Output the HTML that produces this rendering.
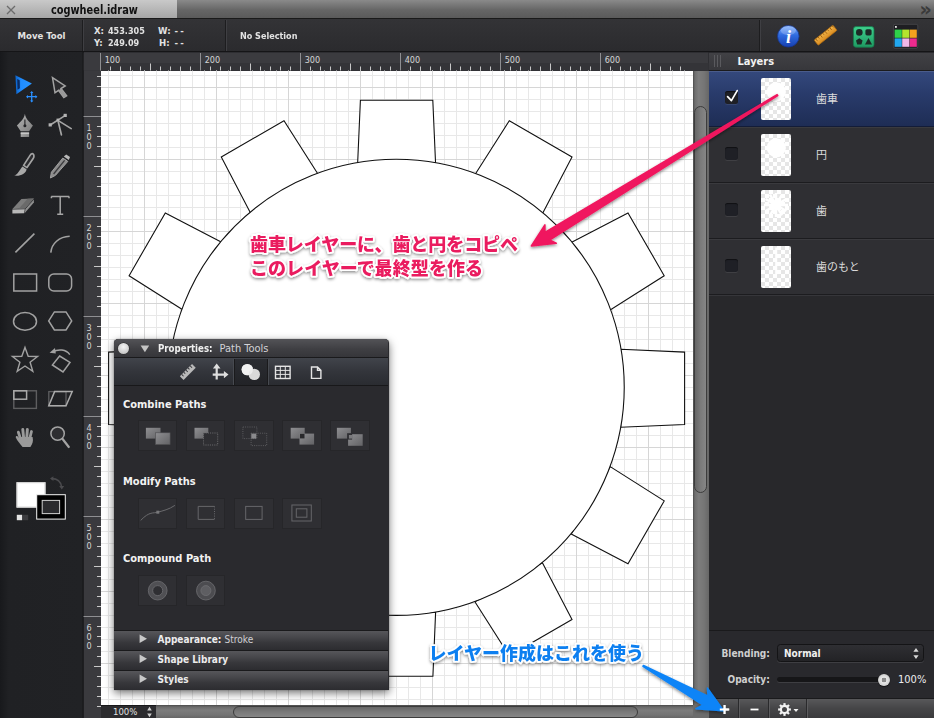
<!DOCTYPE html>
<html lang="ja">
<head>
<meta charset="utf-8">
<title>cogwheel.idraw</title>
<style>
html,body{margin:0;padding:0;}
body{width:934px;height:718px;overflow:hidden;position:relative;background:#232326;font-family:"DejaVu Sans Condensed","DejaVu Sans","Liberation Sans","Noto Sans CJK JP",sans-serif;color:#e6e6e6;}
.abs{position:absolute;}
#tabbar{left:0;top:0;width:934px;height:19px;background:linear-gradient(#8a8a8a,#666 55%,#5a5a5a);border-bottom:1px solid #1a1a1a;box-sizing:border-box;}
#tab{left:0;top:0;width:177px;height:18px;background:linear-gradient(#c9c9c9,#b4b4b4 60%,#a6a6a6);}
#tabtitle{left:50.5px;top:1.5px;white-space:nowrap;font:bold 12px/16px "DejaVu Sans Condensed","DejaVu Sans",sans-serif;color:#111;transform:scaleX(0.908);transform-origin:0 50%;}
#toolbar{left:0;top:19px;width:934px;height:33px;background:linear-gradient(#333336,#2b2b2e);border-bottom:1px solid #151517;box-sizing:border-box;}
.tsep{top:20px;width:1px;height:31px;background:#3f3f43;box-shadow:-1px 0 0 #1d1d1f;}
.tb{font:bold 9.5px/11px "DejaVu Sans Condensed","DejaVu Sans",sans-serif;color:#e2e2e2;white-space:nowrap;}
#toolbox{left:0;top:52px;width:83px;height:666px;background:linear-gradient(90deg,#18191c 0,#202124 9px,#212225 100%);border-right:1px solid #141416;}
#canvas{left:101px;top:70.5px;width:592px;height:634.5px;background:#fff;}
#rightpanel{left:708.5px;top:52px;width:225.5px;height:666px;background:#2a2a2e;}
.rl{font:9px "DejaVu Sans Condensed","DejaVu Sans",sans-serif;fill:#d4d4d4;}

#lyhead{left:708.5px;top:52.5px;width:225.5px;height:18px;background:linear-gradient(#414145,#37373b);border-bottom:1px solid #1b1b1d;box-sizing:border-box;}
.row{left:708.5px;width:225.5px;height:56px;box-sizing:border-box;background:#2f2f33;border-top:1px solid #3a3a3e;border-bottom:1px solid #1c1c1f;}
.row.sel{background:linear-gradient(#34487c,#293b6b 40%,#1e2d55);border-top:1px solid #4a5c8c;border-bottom:1px solid #131c38;}
.cb{left:725px;width:13px;height:13px;border-radius:2.5px;background:#1f2026;box-shadow:0 1px 0 rgba(255,255,255,0.08), inset 0 1px 1px rgba(0,0,0,0.5);}
.thumb{left:761px;width:30px;height:42px;border-radius:2px;background-color:#fff;background-image:linear-gradient(45deg,#e6e6e6 25%,transparent 25%,transparent 75%,#e6e6e6 75%),linear-gradient(45deg,#e6e6e6 25%,transparent 25%,transparent 75%,#e6e6e6 75%);background-size:8px 8px;background-position:0 0,4px 4px;overflow:hidden;}
.lname{left:816px;font:11px/14px "Liberation Sans","Noto Sans CJK JP",sans-serif;color:#dcdcdc;white-space:nowrap;}
.plabel{font:bold 10px/13px "DejaVu Sans Condensed","DejaVu Sans",sans-serif;color:#cfcfcf;white-space:nowrap;}
#bbar{left:708.5px;top:697.5px;width:225.5px;height:20.5px;background:linear-gradient(#58585a,#454547 50%,#3a3a3c);border-top:1px solid #1a1a1c;box-sizing:border-box;}
.bsep{top:698.5px;width:1px;height:19.5px;background:#2a2a2c;box-shadow:1px 0 0 #5c5c5e;}

#vtrack{left:693px;top:70.5px;width:15.5px;height:634.5px;background:linear-gradient(90deg,#4c4c4c 0,#6e6e6e 12%,#7d7d7d 35%,#757575 70%,#666 100%);}
#vthumb{left:694px;top:106px;width:13px;height:387px;border-radius:6.5px;box-sizing:border-box;border:1px solid #3c3c3c;background:linear-gradient(90deg,#666,#7a7a7a 50%,#868686);}
#htrack{left:156px;top:705px;width:552.5px;height:13px;background:linear-gradient(#4a4a4a 0,#6a6a6a 15%,#7c7c7c 40%,#747474 75%,#666 100%);}
#hthumb{left:232.5px;top:705.5px;width:405.5px;height:12.5px;border-radius:6.5px;box-sizing:border-box;border:1px solid #3c3c3c;background:linear-gradient(#666,#7a7a7a 50%,#868686);}
#zoombox{left:101px;top:705px;width:55px;height:13px;background:#2c2c2f;border-top:1px solid #18181a;box-sizing:border-box;}

#fp{left:114px;top:339px;width:274.5px;height:350.5px;border-radius:4.5px 4.5px 0 0;background:#2a2a2e;box-shadow:0 3px 9px rgba(0,0,0,0.55),0 0 1px rgba(0,0,0,0.7);overflow:hidden;}
#fptitle{left:0;top:0;width:274px;height:19px;background:linear-gradient(#535357,#3f3f43 55%,#36363a);border-bottom:1px solid #1a1a1c;box-sizing:border-box;}
#fptools{left:0;top:19px;width:274px;height:27.5px;background:linear-gradient(#41444b,#33353b 50%,#2a2c31);border-bottom:1px solid #18181a;box-sizing:border-box;}
.fph{font:bold 11px/14px "DejaVu Sans Condensed","DejaVu Sans",sans-serif;color:#f2f2f2;white-space:nowrap;left:9px;}
.fbtn{width:39.5px;height:31.5px;background:#2f2f33;box-shadow:0 0 0 1px #262629 inset;}
.acc{left:0;width:274px;height:20px;box-sizing:border-box;background:linear-gradient(#56565a,#48484c 30%,#38383c 60%,#2c2c30);border-top:1px solid #1a1a1c;}
.acct{left:43.5px;font:bold 10px/13px "DejaVu Sans Condensed","DejaVu Sans",sans-serif;color:#ececec;white-space:nowrap;}
</style>
</head>
<body>
<!-- TAB BAR -->
<div id="tabbar" class="abs"></div>
<div id="tab" class="abs"></div>
<div id="tabtitle" class="abs">cogwheel.idraw</div>
<svg class="abs" style="left:5px;top:4px" width="12" height="12" viewBox="0 0 12 12"><path d="M2 2 L10 10 M10 2 L2 10" stroke="#6c6c6c" stroke-width="1.3" fill="none"/></svg>
<div class="abs" style="left:919.5px;top:-2.5px;font:bold 19px/22px 'DejaVu Sans',sans-serif;color:#3a3a3a;">»</div>

<!-- TOOLBAR -->
<div id="toolbar" class="abs"></div>
<div class="abs tsep" style="left:82.5px"></div>
<div class="abs tsep" style="left:225.5px"></div>
<div class="abs tsep" style="left:759.5px"></div>
<div class="abs tb" style="left:17.5px;top:30px;">Move Tool</div>
<div class="abs tb" style="left:94px;top:25px;">X:</div>
<div class="abs tb" style="left:108px;top:25px;transform:scaleX(0.945);transform-origin:0 50%;">453.305</div>
<div class="abs tb" style="left:158px;top:25px;">W:</div>
<div class="abs tb" style="left:174.5px;top:25px;letter-spacing:2.2px;">--</div>
<div class="abs tb" style="left:94px;top:37px;">Y:</div>
<div class="abs tb" style="left:108px;top:37px;transform:scaleX(0.945);transform-origin:0 50%;">249.09</div>
<div class="abs tb" style="left:159px;top:37px;">H:</div>
<div class="abs tb" style="left:174.5px;top:37px;letter-spacing:2.2px;">--</div>
<div class="abs tb" style="left:240px;top:30px;transform:scaleX(0.945);transform-origin:0 50%;">No Selection</div>


<!-- TOP RIGHT ICONS -->
<svg class="abs" style="left:760px;top:19px" width="174" height="33" viewBox="760 19 174 33">
<defs>
<linearGradient id="gi" x1="0" y1="0" x2="0" y2="1"><stop offset="0" stop-color="#7fb0ff"/><stop offset="0.45" stop-color="#2f6be0"/><stop offset="1" stop-color="#163fae"/></linearGradient>
<linearGradient id="gr" x1="0" y1="0" x2="0" y2="1"><stop offset="0" stop-color="#f2b54a"/><stop offset="1" stop-color="#d98a1e"/></linearGradient>
<linearGradient id="gg" x1="0" y1="0" x2="0" y2="1"><stop offset="0" stop-color="#3fd08e"/><stop offset="1" stop-color="#1e9a62"/></linearGradient>
</defs>
<circle cx="788.3" cy="36.3" r="10.8" fill="url(#gi)" stroke="#16348a" stroke-width="0.8"/>
<ellipse cx="788.3" cy="30.5" rx="7.6" ry="4.6" fill="#fff" opacity="0.22"/>
<text x="788.6" y="42.6" text-anchor="middle" font-family="'Liberation Serif','DejaVu Serif',serif" font-style="italic" font-weight="bold" font-size="18" fill="#fff">i</text>
<g transform="translate(825.6,35.2) rotate(-38.5)"><rect x="-12" y="-3.3" width="24" height="6.6" rx="0.8" fill="url(#gr)" stroke="#b06e12" stroke-width="0.7"/><path d="M-10 -3.3 v3 M-7 -3.3 v2 M-4 -3.3 v3 M-1 -3.3 v2 M2 -3.3 v3 M5 -3.3 v2 M8 -3.3 v3 M11 -3.3 v2" stroke="#9a5c0c" stroke-width="0.8"/></g>
<rect x="853.4" y="26.6" width="20.6" height="20.6" rx="2.6" fill="url(#gg)" stroke="#14784a" stroke-width="0.8"/>
<g fill="#1c2a26"><circle cx="859.3" cy="32.4" r="3.3"/><rect x="865.4" y="29.2" width="6.2" height="6.2" rx="1.6"/><path d="M859.3 38.2 L862.6 40.6 L861.4 44.6 H857.2 L856 40.6 Z"/><path d="M868.5 38 L872 44.6 H865 Z"/></g>
<rect x="893.4" y="24.3" width="24.4" height="24" rx="1.6" fill="#1e1e22" stroke="#4a4a4e" stroke-width="0.8"/>
<rect x="895" y="26" width="1.8" height="1.8" fill="#e8e8e8"/>
<rect x="894.6" y="29.6" width="7.2" height="8.2" fill="#2fd24a"/><rect x="902.2" y="29.6" width="7.2" height="8.2" fill="#b4e42e"/><rect x="909.8" y="29.6" width="7" height="8.2" fill="#f5a21e"/>
<rect x="894.6" y="38.4" width="7.2" height="8.4" fill="#22a8f0"/><rect x="902.2" y="38.4" width="7.2" height="8.4" fill="#f0b8e8"/><rect x="909.8" y="38.4" width="7" height="8.4" fill="#ee2a8e"/>
</svg>

<!-- TOOLBOX -->
<div id="toolbox" class="abs"></div>


<!-- TOOLBOX ICONS -->
<svg class="abs" style="left:0;top:52px" width="83" height="666" viewBox="0 52 83 666">
<defs>
<linearGradient id="gm" x1="0" y1="0" x2="1" y2="1"><stop offset="0" stop-color="#b4b4b4"/><stop offset="1" stop-color="#7e7e7e"/></linearGradient>
<linearGradient id="gb" x1="0" y1="0" x2="1" y2="0"><stop offset="0" stop-color="#0c62c8"/><stop offset="0.35" stop-color="#1f8cff"/><stop offset="1" stop-color="#2a96ff"/></linearGradient>
</defs>
<!-- move tool -->
<path d="M15.4 75.2 L31.9 83.6 L16.4 94.2 Z" fill="url(#gb)"/>
<path d="M17.200 79 L19.700 80.300 L19.900 88.200 L17.500 89.800 Z" fill="#0b2b63"/>
<g stroke="#2a90ff" stroke-width="1.3" fill="#2a90ff"><path d="M31.7 92 V101.4 M27 96.7 H36.4" fill="none"/><path d="M31.7 91 l1.7 2 h-3.4z M31.7 102.4 l1.7 -2 h-3.4z M26 96.7 l2 -1.7 v3.4z M37.4 96.7 l-2 -1.7 v3.4z" stroke="none"/></g>
<!-- select arrow -->
<path d="M52.500 77.600 L65.200 85.900 L61 88.500 L66.600 95.800 L63.800 97.600 L58.500 90.300 L55 92.800 Z" fill="#2a2a2d" stroke="#a3a3a3" stroke-width="1.500" stroke-linejoin="miter"/><path d="M61 88.500 L66.600 95.800 L63.800 97.600 L58.500 90.300 Z" fill="#9a9a9a"/>
<!-- pen nib -->
<path d="M24.9 113.8 C24.2 118.8 20.4 122 16.9 125.5 L20.7 131.3 H29.1 L32.9 125.5 C29.400 122 25.600 118.800 24.900 113.800 Z" fill="url(#gm)"/>
<path d="M24.9 119.600 V125" stroke="#242427" stroke-width="1.100"/><circle cx="24.900" cy="125.700" r="1.500" fill="#242427"/>
<rect x="20.700" y="132.500" width="8.400" height="4.500" fill="url(#gm)"/><rect x="20.700" y="132.500" width="8.400" height="1.300" fill="#d0d0d0"/>
<!-- anchor tool -->
<g stroke="#a4a4a4" stroke-width="1.700" fill="none" stroke-linecap="round"><path d="M50.600 124.800 L65 115.600"/><path d="M57.900 120.400 L61.400 134.800"/><path d="M57.900 120.400 L71.200 128.600"/></g>
<rect x="48.600" y="123.300" width="3.200" height="3.200" fill="#b4b4b4"/><rect x="63.600" y="113.800" width="3.200" height="3.200" fill="#b4b4b4"/><rect x="56.500" y="118.600" width="2.600" height="2.600" fill="#b4b4b4"/>
<!-- brush -->
<path d="M32.800 153.800 C34.400 154.800 34.200 157 33 158.800 L27 167.600 L23.600 165.400 L29.400 156.400 C30.400 154.600 31.600 153.200 32.800 153.800 Z" fill="#2c2c2f" stroke="#a4a4a4" stroke-width="1.700" stroke-linejoin="round"/>
<path d="M22.400 166.400 L26.600 169.200 C25.800 173.800 20.400 176.400 14.200 175.600 C18 174.200 19.200 170.400 22.400 166.400 Z" fill="#a8a8a8"/>
<!-- pencil -->
<path d="M62.800 158 L67.800 161.400 L55.400 175.400 L50.400 178 L51.400 172.200 Z" fill="#8c8c8c" stroke="#a0a0a0" stroke-width="1" stroke-linejoin="round"/>
<path d="M64.600 160.400 L53.600 174" stroke="#3a3a3d" stroke-width="1.300"/>
<path d="M63.800 156.600 L66.200 154.400 L70 157 L68.800 160 Z" fill="#b8b8b8"/>
<!-- eraser -->
<path d="M21.4 199 L33.9 198.6 L25 208.6 L12.4 209 Z" fill="#7c7c7c"/>
<path d="M12.4 209.6 L24.8 209.2 L24.2 213.2 L12.4 213.6 Z" fill="#b8b8b8"/>
<path d="M25.4 209 L33.9 199.4 V202.6 L24.8 213 Z" fill="#8e8e8e"/>
<path d="M27.6 198.8 L33.9 198.6 L25 208.6 L18.8 208.8Z" fill="#6a6a6a"/>
<!-- T -->
<path d="M51.2 196.4 H69.2 M60.2 196.4 V214.2 M57.2 214.2 H63.2 M51.4 196.4 v1.8 M69 196.4 v1.8" stroke="#a6a6a6" stroke-width="1.5" fill="none"/>
<!-- line -->
<path d="M34.4 233.6 L15.4 252.4" stroke="#a2a2a2" stroke-width="1.6"/>
<!-- arc -->
<path d="M69.7 236.3 C59 236.8 51.6 243.6 50.8 252.6" stroke="#a2a2a2" stroke-width="1.6" fill="none"/>
<!-- rect, rrect -->
<rect x="13.8" y="274" width="22.8" height="17" fill="none" stroke="#a2a2a2" stroke-width="1.5"/>
<rect x="48.8" y="274" width="22.8" height="17" rx="5" fill="none" stroke="#a2a2a2" stroke-width="1.5"/>
<!-- ellipse, hexagon -->
<ellipse cx="25" cy="321.4" rx="11.5" ry="8.8" fill="none" stroke="#a2a2a2" stroke-width="1.5"/>
<path d="M48.7 320.9 L54.4 311.9 H66 L71.7 320.9 L66 329.9 H54.4 Z" fill="none" stroke="#a2a2a2" stroke-width="1.5"/>
<!-- star -->
<polygon points="25.0,347.4 28.2,356.2 37.6,356.5 30.1,362.3 32.8,371.3 25.0,366.0 17.2,371.3 19.9,362.3 12.4,356.5 21.8,356.2" fill="none" stroke="#a2a2a2" stroke-width="1.4"/>
<!-- rotate -->
<path d="M59.6 356 L70 362.4 L63 372 L52.4 365 Z" fill="none" stroke="#a2a2a2" stroke-width="1.5"/>
<path d="M69.8 354.6 C66 349.4 58.6 348.6 52.4 352" fill="none" stroke="#a2a2a2" stroke-width="1.5"/>
<path d="M49.6 352.8 L55 348 L55.8 353.6 Z" fill="#a2a2a2"/>
<!-- scale -->
<rect x="13.8" y="390.8" width="22.6" height="17.6" fill="none" stroke="#5e5e60" stroke-width="1.4"/>
<rect x="13.8" y="390.8" width="12.8" height="8.4" fill="none" stroke="#aaa" stroke-width="1.5"/>
<!-- shear -->
<rect x="48.8" y="391.6" width="17.2" height="14.2" fill="none" stroke="#5e5e60" stroke-width="1.3"/>
<path d="M54.6 391.6 H72.2 L66 405.8 H48.8 Z" fill="none" stroke="#aaa" stroke-width="1.5"/>
<!-- hand -->
<g fill="#9a9a9a"><rect x="18.2" y="430.6" width="2.8" height="10" rx="1.4" transform="rotate(-18 19.6 436)"/><rect x="21.8" y="428" width="2.9" height="11" rx="1.4" transform="rotate(-6 23.2 434)"/><rect x="25.6" y="428" width="2.9" height="11" rx="1.4" transform="rotate(4 27 434)"/><rect x="29.2" y="430" width="2.8" height="10" rx="1.4" transform="rotate(14 30.6 435)"/>
<path d="M19.6 437 H32.6 C33.6 441.4 32.4 444.2 30.4 447 H22.6 C20.2 444 17.2 441 15.8 437.6 C15.4 436 17 435.4 18 436.6 L20.6 440 Z"/></g>
<!-- magnifier -->
<circle cx="57.6" cy="433.6" r="6.7" fill="#2e2e31" stroke="#a4a4a4" stroke-width="1.5"/>
<path d="M62.4 438.8 L68.8 447" stroke="#a4a4a4" stroke-width="2.2" stroke-linecap="round"/>
<!-- swap arrow -->
<path d="M51.4 478.6 C57 478.4 61 481.6 61.6 487" fill="none" stroke="#4a4a4d" stroke-width="1.6"/><path d="M50 478.6 l3.4 -2.4 v4.8z M61.8 489.4 l-2.6 -3.4 h5z" fill="#4a4a4d"/>
<!-- fill / stroke swatches -->
<rect x="16.5" y="482.2" width="29" height="25.4" fill="#fff" stroke="#d8d8d8" stroke-width="0"/>
<rect x="17" y="482.7" width="28" height="24.4" fill="#fff" stroke="#cfcfcf" stroke-width="1"/>
<rect x="36.7" y="494.7" width="28.6" height="24.4" fill="#000" stroke="#f4f4f4" stroke-width="1"/>
<rect x="42.2" y="500.4" width="17.4" height="13.2" fill="#2b2b2e" stroke="#d0d0d0" stroke-width="1"/>
<rect x="16.8" y="514.8" width="5.4" height="5.4" fill="#e4e4e4"/><rect x="22.8" y="514.8" width="5.4" height="5.4" fill="#3c3c3f"/>
</svg>

<!-- CANVAS -->
<div id="canvas" class="abs"></div>

<!-- MAIN SVG OVERLAY: rulers, grid, cog -->
<svg class="abs" style="left:0;top:0" width="934" height="718" viewBox="0 0 934 718">
<defs>
<pattern id="grid" x="108" y="75" width="12" height="12" patternUnits="userSpaceOnUse">
<path d="M0.5 0 V12 M0 0.5 H12" stroke="#e8e8e8" stroke-width="1" fill="none" shape-rendering="crispEdges"/>
</pattern>
<pattern id="grid2" x="144" y="87" width="72" height="72" patternUnits="userSpaceOnUse">
<path d="M0.5 0 V72 M0 0.5 H72" stroke="#d6d6d6" stroke-width="1" fill="none" shape-rendering="crispEdges"/>
</pattern>
<clipPath id="cv"><rect x="101" y="70.5" width="592" height="634.5"/></clipPath>
</defs>
<!-- rulers -->
<rect x="83.5" y="52.5" width="625" height="18" fill="#3b3b3f"/>
<rect x="83.5" y="63" width="625" height="7.5" fill="#343438"/>
<rect x="83.5" y="70.5" width="17.5" height="647.5" fill="#3a3a3e"/>
<rect x="83.5" y="52.5" width="17.5" height="18" fill="#3a3a3e"/>
<rect x="82.5" y="52" width="1" height="666" fill="#161618"/>
<rect x="100.0" y="53" width="1" height="17.5" fill="#8f8f92"/>
<text x="104.7" y="63.2" class="rl">100</text>
<rect x="110.0" y="66.5" width="1" height="4" fill="#c8c8c8"/>
<rect x="120.0" y="66.5" width="1" height="4" fill="#c8c8c8"/>
<rect x="130.0" y="66.5" width="1" height="4" fill="#c8c8c8"/>
<rect x="140.0" y="66.5" width="1" height="4" fill="#c8c8c8"/>
<rect x="150.0" y="63.5" width="1" height="7" fill="#c8c8c8"/>
<rect x="160.0" y="66.5" width="1" height="4" fill="#c8c8c8"/>
<rect x="170.0" y="66.5" width="1" height="4" fill="#c8c8c8"/>
<rect x="180.0" y="66.5" width="1" height="4" fill="#c8c8c8"/>
<rect x="190.0" y="66.5" width="1" height="4" fill="#c8c8c8"/>
<rect x="200.0" y="53" width="1" height="17.5" fill="#8f8f92"/>
<text x="204.7" y="63.2" class="rl">200</text>
<rect x="210.0" y="66.5" width="1" height="4" fill="#c8c8c8"/>
<rect x="220.0" y="66.5" width="1" height="4" fill="#c8c8c8"/>
<rect x="230.0" y="66.5" width="1" height="4" fill="#c8c8c8"/>
<rect x="240.0" y="66.5" width="1" height="4" fill="#c8c8c8"/>
<rect x="250.0" y="63.5" width="1" height="7" fill="#c8c8c8"/>
<rect x="260.0" y="66.5" width="1" height="4" fill="#c8c8c8"/>
<rect x="270.0" y="66.5" width="1" height="4" fill="#c8c8c8"/>
<rect x="280.0" y="66.5" width="1" height="4" fill="#c8c8c8"/>
<rect x="290.0" y="66.5" width="1" height="4" fill="#c8c8c8"/>
<rect x="300.0" y="53" width="1" height="17.5" fill="#8f8f92"/>
<text x="304.7" y="63.2" class="rl">300</text>
<rect x="310.0" y="66.5" width="1" height="4" fill="#c8c8c8"/>
<rect x="320.0" y="66.5" width="1" height="4" fill="#c8c8c8"/>
<rect x="330.0" y="66.5" width="1" height="4" fill="#c8c8c8"/>
<rect x="340.0" y="66.5" width="1" height="4" fill="#c8c8c8"/>
<rect x="350.0" y="63.5" width="1" height="7" fill="#c8c8c8"/>
<rect x="360.0" y="66.5" width="1" height="4" fill="#c8c8c8"/>
<rect x="370.0" y="66.5" width="1" height="4" fill="#c8c8c8"/>
<rect x="380.0" y="66.5" width="1" height="4" fill="#c8c8c8"/>
<rect x="390.0" y="66.5" width="1" height="4" fill="#c8c8c8"/>
<rect x="400.0" y="53" width="1" height="17.5" fill="#8f8f92"/>
<text x="404.7" y="63.2" class="rl">400</text>
<rect x="410.0" y="66.5" width="1" height="4" fill="#c8c8c8"/>
<rect x="420.0" y="66.5" width="1" height="4" fill="#c8c8c8"/>
<rect x="430.0" y="66.5" width="1" height="4" fill="#c8c8c8"/>
<rect x="440.0" y="66.5" width="1" height="4" fill="#c8c8c8"/>
<rect x="450.0" y="63.5" width="1" height="7" fill="#c8c8c8"/>
<rect x="460.0" y="66.5" width="1" height="4" fill="#c8c8c8"/>
<rect x="470.0" y="66.5" width="1" height="4" fill="#c8c8c8"/>
<rect x="480.0" y="66.5" width="1" height="4" fill="#c8c8c8"/>
<rect x="490.0" y="66.5" width="1" height="4" fill="#c8c8c8"/>
<rect x="500.0" y="53" width="1" height="17.5" fill="#8f8f92"/>
<text x="504.7" y="63.2" class="rl">500</text>
<rect x="510.0" y="66.5" width="1" height="4" fill="#c8c8c8"/>
<rect x="520.0" y="66.5" width="1" height="4" fill="#c8c8c8"/>
<rect x="530.0" y="66.5" width="1" height="4" fill="#c8c8c8"/>
<rect x="540.0" y="66.5" width="1" height="4" fill="#c8c8c8"/>
<rect x="550.0" y="63.5" width="1" height="7" fill="#c8c8c8"/>
<rect x="560.0" y="66.5" width="1" height="4" fill="#c8c8c8"/>
<rect x="570.0" y="66.5" width="1" height="4" fill="#c8c8c8"/>
<rect x="580.0" y="66.5" width="1" height="4" fill="#c8c8c8"/>
<rect x="590.0" y="66.5" width="1" height="4" fill="#c8c8c8"/>
<rect x="600.0" y="53" width="1" height="17.5" fill="#8f8f92"/>
<text x="604.7" y="63.2" class="rl">600</text>
<rect x="610.0" y="66.5" width="1" height="4" fill="#c8c8c8"/>
<rect x="620.0" y="66.5" width="1" height="4" fill="#c8c8c8"/>
<rect x="630.0" y="66.5" width="1" height="4" fill="#c8c8c8"/>
<rect x="640.0" y="66.5" width="1" height="4" fill="#c8c8c8"/>
<rect x="650.0" y="63.5" width="1" height="7" fill="#c8c8c8"/>
<rect x="660.0" y="66.5" width="1" height="4" fill="#c8c8c8"/>
<rect x="670.0" y="66.5" width="1" height="4" fill="#c8c8c8"/>
<rect x="680.0" y="66.5" width="1" height="4" fill="#c8c8c8"/>
<rect x="97" y="76.0" width="4" height="1" fill="#c8c8c8"/>
<rect x="97" y="86.0" width="4" height="1" fill="#c8c8c8"/>
<rect x="97" y="96.0" width="4" height="1" fill="#c8c8c8"/>
<rect x="97" y="106.0" width="4" height="1" fill="#c8c8c8"/>
<rect x="83.5" y="116.0" width="17.5" height="1" fill="#8f8f92"/>
<text x="89.2" y="130.5" class="rl" text-anchor="middle">1</text>
<text x="89.2" y="139.9" class="rl" text-anchor="middle">0</text>
<text x="89.2" y="149.3" class="rl" text-anchor="middle">0</text>
<rect x="97" y="126.0" width="4" height="1" fill="#c8c8c8"/>
<rect x="97" y="136.0" width="4" height="1" fill="#c8c8c8"/>
<rect x="97" y="146.0" width="4" height="1" fill="#c8c8c8"/>
<rect x="97" y="156.0" width="4" height="1" fill="#c8c8c8"/>
<rect x="94" y="166.0" width="7" height="1" fill="#c8c8c8"/>
<rect x="97" y="176.0" width="4" height="1" fill="#c8c8c8"/>
<rect x="97" y="186.0" width="4" height="1" fill="#c8c8c8"/>
<rect x="97" y="196.0" width="4" height="1" fill="#c8c8c8"/>
<rect x="97" y="206.0" width="4" height="1" fill="#c8c8c8"/>
<rect x="83.5" y="216.0" width="17.5" height="1" fill="#8f8f92"/>
<text x="89.2" y="230.5" class="rl" text-anchor="middle">2</text>
<text x="89.2" y="239.9" class="rl" text-anchor="middle">0</text>
<text x="89.2" y="249.3" class="rl" text-anchor="middle">0</text>
<rect x="97" y="226.0" width="4" height="1" fill="#c8c8c8"/>
<rect x="97" y="236.0" width="4" height="1" fill="#c8c8c8"/>
<rect x="97" y="246.0" width="4" height="1" fill="#c8c8c8"/>
<rect x="97" y="256.0" width="4" height="1" fill="#c8c8c8"/>
<rect x="94" y="266.0" width="7" height="1" fill="#c8c8c8"/>
<rect x="97" y="276.0" width="4" height="1" fill="#c8c8c8"/>
<rect x="97" y="286.0" width="4" height="1" fill="#c8c8c8"/>
<rect x="97" y="296.0" width="4" height="1" fill="#c8c8c8"/>
<rect x="97" y="306.0" width="4" height="1" fill="#c8c8c8"/>
<rect x="83.5" y="316.0" width="17.5" height="1" fill="#8f8f92"/>
<text x="89.2" y="330.5" class="rl" text-anchor="middle">3</text>
<text x="89.2" y="339.9" class="rl" text-anchor="middle">0</text>
<text x="89.2" y="349.3" class="rl" text-anchor="middle">0</text>
<rect x="97" y="326.0" width="4" height="1" fill="#c8c8c8"/>
<rect x="97" y="336.0" width="4" height="1" fill="#c8c8c8"/>
<rect x="97" y="346.0" width="4" height="1" fill="#c8c8c8"/>
<rect x="97" y="356.0" width="4" height="1" fill="#c8c8c8"/>
<rect x="94" y="366.0" width="7" height="1" fill="#c8c8c8"/>
<rect x="97" y="376.0" width="4" height="1" fill="#c8c8c8"/>
<rect x="97" y="386.0" width="4" height="1" fill="#c8c8c8"/>
<rect x="97" y="396.0" width="4" height="1" fill="#c8c8c8"/>
<rect x="97" y="406.0" width="4" height="1" fill="#c8c8c8"/>
<rect x="83.5" y="416.0" width="17.5" height="1" fill="#8f8f92"/>
<text x="89.2" y="430.5" class="rl" text-anchor="middle">4</text>
<text x="89.2" y="439.9" class="rl" text-anchor="middle">0</text>
<text x="89.2" y="449.3" class="rl" text-anchor="middle">0</text>
<rect x="97" y="426.0" width="4" height="1" fill="#c8c8c8"/>
<rect x="97" y="436.0" width="4" height="1" fill="#c8c8c8"/>
<rect x="97" y="446.0" width="4" height="1" fill="#c8c8c8"/>
<rect x="97" y="456.0" width="4" height="1" fill="#c8c8c8"/>
<rect x="94" y="466.0" width="7" height="1" fill="#c8c8c8"/>
<rect x="97" y="476.0" width="4" height="1" fill="#c8c8c8"/>
<rect x="97" y="486.0" width="4" height="1" fill="#c8c8c8"/>
<rect x="97" y="496.0" width="4" height="1" fill="#c8c8c8"/>
<rect x="97" y="506.0" width="4" height="1" fill="#c8c8c8"/>
<rect x="83.5" y="516.0" width="17.5" height="1" fill="#8f8f92"/>
<text x="89.2" y="530.5" class="rl" text-anchor="middle">5</text>
<text x="89.2" y="539.9" class="rl" text-anchor="middle">0</text>
<text x="89.2" y="549.3" class="rl" text-anchor="middle">0</text>
<rect x="97" y="526.0" width="4" height="1" fill="#c8c8c8"/>
<rect x="97" y="536.0" width="4" height="1" fill="#c8c8c8"/>
<rect x="97" y="546.0" width="4" height="1" fill="#c8c8c8"/>
<rect x="97" y="556.0" width="4" height="1" fill="#c8c8c8"/>
<rect x="94" y="566.0" width="7" height="1" fill="#c8c8c8"/>
<rect x="97" y="576.0" width="4" height="1" fill="#c8c8c8"/>
<rect x="97" y="586.0" width="4" height="1" fill="#c8c8c8"/>
<rect x="97" y="596.0" width="4" height="1" fill="#c8c8c8"/>
<rect x="97" y="606.0" width="4" height="1" fill="#c8c8c8"/>
<rect x="83.5" y="616.0" width="17.5" height="1" fill="#8f8f92"/>
<text x="89.2" y="630.5" class="rl" text-anchor="middle">6</text>
<text x="89.2" y="639.9" class="rl" text-anchor="middle">0</text>
<text x="89.2" y="649.3" class="rl" text-anchor="middle">0</text>
<rect x="97" y="626.0" width="4" height="1" fill="#c8c8c8"/>
<rect x="97" y="636.0" width="4" height="1" fill="#c8c8c8"/>
<rect x="97" y="646.0" width="4" height="1" fill="#c8c8c8"/>
<rect x="97" y="656.0" width="4" height="1" fill="#c8c8c8"/>
<rect x="94" y="666.0" width="7" height="1" fill="#c8c8c8"/>
<rect x="97" y="676.0" width="4" height="1" fill="#c8c8c8"/>
<rect x="97" y="686.0" width="4" height="1" fill="#c8c8c8"/>
<rect x="97" y="696.0" width="4" height="1" fill="#c8c8c8"/>
<rect x="97" y="706.0" width="4" height="1" fill="#c8c8c8"/>
<!-- grid -->
<rect x="101" y="70.5" width="592" height="634.5" fill="url(#grid)"/>
<rect x="101" y="70.5" width="592" height="634.5" fill="url(#grid2)"/>
<!-- cog -->
<g clip-path="url(#cv)" fill="#fff" stroke="#111" stroke-width="1.1" stroke-linejoin="miter">
<polygon points="357.6,164.2 360.4,100.3 432.8,100.3 435.6,164.2"/>
<polygon points="474.9,174.8 509.3,120.8 572.0,157.0 542.4,213.8"/>
<polygon points="571.2,242.5 628.0,212.9 664.2,275.7 610.2,310.0"/>
<polygon points="620.7,349.3 684.6,352.1 684.6,424.5 620.7,427.3"/>
<polygon points="610.2,466.6 664.2,500.9 628.0,563.7 571.2,534.1"/>
<polygon points="542.4,562.8 572.0,619.6 509.3,655.8 474.9,601.8"/>
<polygon points="435.6,612.4 432.9,676.3 360.5,676.3 357.6,612.4"/>
<polygon points="318.4,601.8 284.0,655.8 221.3,619.6 250.9,562.8"/>
<polygon points="222.1,534.1 165.3,563.7 129.1,500.9 183.1,466.6"/>
<polygon points="172.6,427.3 108.6,424.5 108.6,352.1 172.6,349.3"/>
<polygon points="183.1,310.0 129.1,275.7 165.3,212.9 222.1,242.5"/>
<polygon points="250.9,213.8 221.3,157.0 284.0,120.8 318.4,174.8"/>
<circle cx="396.2" cy="387.35" r="228.05"/>
</g>
</svg>



<!-- SCROLLBARS -->
<div id="vtrack" class="abs"></div>
<div id="vthumb" class="abs"></div>
<div id="htrack" class="abs"></div>
<div id="hthumb" class="abs"></div>
<div class="abs" style="left:693px;top:705px;width:15.5px;height:13px;background:#6c6c6c;"></div>
<div id="zoombox" class="abs"></div>
<div class="abs" style="left:113px;top:706px;font:9.5px/12px 'DejaVu Sans Condensed','DejaVu Sans',sans-serif;color:#e0e0e0;">100%</div>
<svg class="abs" style="left:145.5px;top:706px" width="7" height="12" viewBox="0 0 7 12"><path d="M3.5 0.8 L5.8 4.4 H1.2 Z M3.5 11.2 L5.8 7.6 H1.2 Z" fill="#d0d0d0"/></svg>

<!-- RIGHT PANEL -->
<div id="rightpanel" class="abs"></div>
<div id="lyhead" class="abs"></div>
<div class="abs" style="left:714px;top:55px;width:1px;height:12px;background:#5a5a5e;box-shadow:3px 0 0 #5a5a5e,6px 0 0 #5a5a5e;"></div>
<div class="abs" style="left:737.5px;top:54.5px;font:bold 11px/14px 'DejaVu Sans Condensed','DejaVu Sans',sans-serif;color:#f2f2f2;">Layers</div>

<div class="abs row sel" style="top:70.5px"></div>
<div class="abs row" style="top:126.5px"></div>
<div class="abs row" style="top:182.5px"></div>
<div class="abs row" style="top:238.5px"></div>
<div class="abs" style="left:708.5px;top:294.5px;width:225.5px;height:335.5px;background:#28282b;border-top:1px solid #36363a;box-sizing:border-box;"></div>

<div class="abs cb" style="top:90.5px"></div>
<svg class="abs" style="left:724px;top:86px" width="17" height="17" viewBox="0 0 17 17"><path d="M3.600 10.600 L7.400 14.600 L13.200 4.600" stroke="#fff" stroke-width="1.700" fill="none" stroke-linecap="round" stroke-linejoin="round"/></svg>
<div class="abs cb" style="top:146.5px"></div>
<div class="abs cb" style="top:202.5px"></div>
<div class="abs cb" style="top:258.5px"></div>

<div class="abs thumb" style="top:78px"><svg width="30" height="42"><circle cx="15.3" cy="13.8" r="9.6" fill="#fff"/></svg></div>
<div class="abs thumb" style="top:134px"><svg width="30" height="42"><circle cx="15.3" cy="13.8" r="9.6" fill="#fff"/></svg></div>
<div class="abs thumb" style="top:190px"><svg width="30" height="42"><g stroke="#fff" stroke-width="2.4"><path d="M15 3V27M3 15H27M4.6 9L25.4 21M9 4.6L21 25.4M4.6 21L25.4 9M9 25.4L21 4.6"/></g></svg></div>
<div class="abs thumb" style="top:246px"><svg width="30" height="42"><rect x="14.2" y="1.500" width="2" height="27" fill="#fff"/></svg></div>

<div class="abs lname" style="top:92px">歯車</div>
<div class="abs lname" style="top:148px">円</div>
<div class="abs lname" style="top:204px">歯</div>
<div class="abs lname" style="top:260px">歯のもと</div>

<div class="abs" style="left:708.5px;top:630px;width:225.5px;height:1px;background:#1a1a1c;box-shadow:0 1px 0 #38383b;"></div>
<div class="abs" style="left:708.5px;top:631px;width:225.5px;height:67.5px;background:#29292d;"></div>
<div class="abs plabel" style="left:721.5px;top:646.5px;">Blending:</div>
<div class="abs" style="left:776.5px;top:644px;width:147px;height:17.5px;box-sizing:border-box;border-radius:3.5px;background:linear-gradient(#2f2f33,#232326);border:1px solid #141416;box-shadow:0 1px 0 rgba(255,255,255,0.10);"></div>
<div class="abs plabel" style="left:784px;top:646.5px;color:#f0f0f0;font-weight:bold;font-size:10px;">Normal</div>
<svg class="abs" style="left:912px;top:646.5px" width="8" height="13" viewBox="0 0 8 13"><path d="M4 1 L6.6 4.8 H1.4 Z M4 12 L6.6 8.2 H1.4 Z" fill="#d8d8d8"/></svg>
<div class="abs plabel" style="left:727.5px;top:673px;">Opacity:</div>
<div class="abs" style="left:777px;top:677px;width:108px;height:5px;border-radius:3px;background:#161618;box-shadow:0 1px 0 rgba(255,255,255,0.10);"></div>
<div class="abs" style="left:878px;top:674px;width:11.5px;height:11.5px;border-radius:6px;background:radial-gradient(circle at 50% 50%,#8a8a8a 0 2.2px,#e9e9e9 2.6px,#d2d2d2 5.5px);box-shadow:0 1px 1px rgba(0,0,0,0.6);"></div>
<div class="abs plabel" style="left:898px;top:673px;color:#ededed;font-weight:normal;font-size:11px;">100%</div>

<div id="bbar" class="abs"></div>
<div class="abs bsep" style="left:738px"></div>
<div class="abs bsep" style="left:768px"></div>
<div class="abs bsep" style="left:806px"></div>
<svg class="abs" style="left:708.5px;top:699px" width="100" height="19" viewBox="0 0 100 19">
<path d="M15.8 6 V15 M11.3 10.5 H20.3" stroke="#fff" stroke-width="1.8" fill="none"/>
<path d="M41.5 10.5 H49.5" stroke="#fff" stroke-width="1.8" fill="none"/>
<g transform="translate(75.5,10.5)" fill="#f2f2f2">
<circle r="3.6" fill="none" stroke="#f2f2f2" stroke-width="2.2"/>
<g id="gt"><rect x="-1.1" y="-6.4" width="2.2" height="2.6"/><rect x="-1.1" y="3.8" width="2.2" height="2.6"/></g>
<use href="#gt" transform="rotate(45)"/><use href="#gt" transform="rotate(90)"/><use href="#gt" transform="rotate(135)"/>
</g>
<path d="M84.5 10 h5 l-2.5 3 z" fill="#f2f2f2"/>
</svg>


<!-- FLOATING PROPERTIES PANEL -->
<div id="fp" class="abs">
<div id="fptitle" class="abs"></div>
<div id="fptools" class="abs"></div>
<div class="abs" style="left:120.5px;top:20px;width:32px;height:25.5px;background:linear-gradient(#2b2d32,#222327);box-shadow:-1px 0 0 #1a1a1c,1px 0 0 #1a1a1c,-2px 0 0 #474a50,2px 0 0 #474a50;"></div>
<div class="abs" style="left:4.3px;top:3.6px;width:11px;height:11px;border-radius:6px;background:radial-gradient(circle at 50% 35%,#f4f4f4,#cdcdcd 65%,#a2a2a2);box-shadow:0 0 0 0.6px #2a2a2a;"></div>
<svg class="abs" style="left:25.5px;top:6px" width="10" height="8" viewBox="0 0 10 8"><path d="M0.6 0.6 H9.2 L4.9 7.2 Z" fill="#c4c4c4"/></svg>
<div class="abs" style="left:44px;top:2.5px;font:bold 11px/14px 'DejaVu Sans Condensed','DejaVu Sans',sans-serif;color:#f0f0f0;white-space:nowrap;transform:scaleX(0.875);transform-origin:0 50%;">Properties:</div>
<div class="abs" style="left:105.5px;top:2.5px;font:11px/14px 'DejaVu Sans Condensed','DejaVu Sans',sans-serif;color:#d2d2d6;white-space:nowrap;">Path Tools</div>
<!-- toolbar icons -->
<svg class="abs" style="left:0;top:19px" width="274" height="28" viewBox="114.5 358 274 28">
<g transform="translate(188.3,372) rotate(-45)"><rect x="-8.6" y="-2.6" width="17.2" height="5.2" fill="#b9b9b9"/><path d="M-6 -2.6 v2.6 M-3 -2.6 v2 M0 -2.6 v2.6 M3 -2.6 v2 M6 -2.6 v2.6" stroke="#3a3a3e" stroke-width="1"/></g>
<g fill="#dedede" stroke="#dedede"><path d="M217.2 367.5 V379.6 M213.2 374.6 H225" fill="none" stroke-width="2.2"/><path d="M217.2 363.6 l3.8 4.8 h-7.600z M229 374.6 l-4.600 -3.600 v7.200z" stroke="none"/></g>
<circle cx="247.8" cy="369.6" r="5.7" fill="#f2f2f2"/><circle cx="254.8" cy="374.4" r="5.7" fill="#d9d9d9"/><circle cx="247.8" cy="369.6" r="5.7" fill="#f2f2f2" opacity="0.7"/>
<g fill="none" stroke="#e4e4e4"><rect x="276" y="366.3" width="14.6" height="12.2" stroke-width="1.4"/><path d="M280.8 366.3 v12.2 M285.8 366.3 v12.2 M276 370.4 h14.6 M276 374.4 h14.6" stroke-width="1"/></g>
<path d="M312 367 H318 L321.4 370.4 V378.4 H312 Z M318 367 V370.4 H321.4" fill="none" stroke="#e4e4e4" stroke-width="1.4" stroke-linejoin="miter"/>
</svg>
<div class="abs fph" style="top:58.5px">Combine Paths</div>
<div class="abs fbtn" style="left:23.8px;top:80.8px"></div>
<div class="abs fbtn" style="left:71.9px;top:80.8px"></div>
<div class="abs fbtn" style="left:120.0px;top:80.8px"></div>
<div class="abs fbtn" style="left:168.1px;top:80.8px"></div>
<div class="abs fbtn" style="left:216.2px;top:80.8px"></div>
<div class="abs fph" style="top:136px">Modify Paths</div>
<div class="abs fbtn" style="left:23.8px;top:158.5px"></div>
<div class="abs fbtn" style="left:71.9px;top:158.5px"></div>
<div class="abs fbtn" style="left:120.0px;top:158.5px"></div>
<div class="abs fbtn" style="left:168.1px;top:158.5px"></div>
<div class="abs fph" style="top:213px">Compound Path</div>
<div class="abs fbtn" style="left:23.8px;top:235.8px"></div>
<div class="abs fbtn" style="left:71.9px;top:235.8px"></div>
<!-- button icons -->
<svg class="abs" style="left:0;top:0" width="274" height="351" viewBox="114.5 339 274 351">
<defs><linearGradient id="gq" x1="0" y1="0" x2="1" y2="1"><stop offset="0" stop-color="#8f8f92"/><stop offset="1" stop-color="#626265"/></linearGradient></defs>
<!-- union -->
<rect x="146.4" y="427.8" width="14.6" height="10.8" fill="url(#gq)"/><rect x="156" y="432.8" width="14.6" height="11.8" fill="url(#gq)" stroke="#4c4c4f" stroke-width="0.6"/>
<!-- subtract -->
<rect x="195" y="427.8" width="13.8" height="10.8" fill="url(#gq)"/><rect x="204" y="433" width="14.2" height="12" fill="#2f2f33" stroke="#6c6c6f" stroke-width="1" stroke-dasharray="1 1.2"/>
<!-- intersect -->
<rect x="243.4" y="427" width="14" height="11.6" fill="none" stroke="#5c5c5f" stroke-width="1" stroke-dasharray="1 1.2"/><rect x="251.6" y="433.2" width="15.6" height="12.4" fill="none" stroke="#5c5c5f" stroke-width="1" stroke-dasharray="1 1.2"/><rect x="251.8" y="433.6" width="5" height="5" fill="#8a8a8d"/>
<!-- exclude -->
<rect x="291.2" y="427.8" width="14" height="10.8" fill="url(#gq)"/><rect x="300" y="433.6" width="14.6" height="11" fill="url(#gq)"/><rect x="300.4" y="433.8" width="4.6" height="4.6" fill="#29292c"/>
<!-- divide -->
<rect x="337.4" y="427.8" width="14" height="10.8" fill="url(#gq)"/><rect x="348.6" y="434.2" width="14.6" height="11.6" fill="url(#gq)"/><rect x="347.6" y="433.2" width="5" height="6.4" fill="#2f2f33"/><rect x="349.4" y="435" width="3.4" height="3.6" fill="#7a7a7d"/>
<!-- modify -->
<path d="M141.2 520.4 C150 511 154 513.6 158.2 512.2 C164 510.6 169 509.6 175.4 505.4" fill="none" stroke="#6a6a6d" stroke-width="1"/><rect x="156.8" y="510.7" width="3" height="3" fill="#77777a"/>
<path d="M215 506.4 H198.7 V519.4 H215" fill="none" stroke="#66666a" stroke-width="1"/><path d="M215 506.4 V519.4" fill="none" stroke="#66666a" stroke-width="1" stroke-dasharray="1 1.3"/>
<rect x="246.2" y="506.4" width="16.4" height="13" fill="none" stroke="#66666a" stroke-width="1"/>
<rect x="292.4" y="505" width="19.4" height="16" fill="none" stroke="#66666a" stroke-width="1"/><rect x="296.8" y="508.8" width="10.6" height="8.4" fill="none" stroke="#66666a" stroke-width="1"/>
<!-- compound -->
<circle cx="158.2" cy="590.6" r="7.2" fill="none" stroke="#505054" stroke-width="4.4"/><circle cx="158.2" cy="590.6" r="9.4" fill="none" stroke="#6e6e72" stroke-width="0.8"/><circle cx="158.2" cy="590.6" r="5" fill="none" stroke="#6e6e72" stroke-width="0.8"/>
<circle cx="206.4" cy="590.6" r="9.4" fill="#4c4c50" stroke="#6e6e72" stroke-width="0.8"/><circle cx="206.4" cy="590.6" r="5" fill="#5e5e62" stroke="#6e6e72" stroke-width="0.8"/>
</svg>
<!-- accordion -->
<div class="abs acc" style="top:290.5px"></div>
<div class="abs acc" style="top:310.5px"></div>
<div class="abs acc" style="top:330.5px"></div>
<svg class="abs" style="left:0;top:290px" width="60" height="61" viewBox="0 0 60 61"><path d="M25.6 5.6 L33 9.800 L25.6 14 Z M25.6 25.6 L33 29.8 L25.6 34 Z M25.6 45.6 L33 49.8 L25.6 54 Z" fill="#c8c8c8"/></svg>
<div class="abs acct" style="top:294px">Appearance: <span style="font-weight:normal;color:#d0d0d4;">Stroke</span></div>
<div class="abs acct" style="top:314px">Shape Library</div>
<div class="abs acct" style="top:334px">Styles</div>
</div>


<!-- ANNOTATIONS -->
<svg class="abs" style="left:0;top:0;" width="934" height="718" viewBox="0 0 934 718">
<defs>
<filter id="sh" x="-10%" y="-30%" width="120%" height="170%"><feDropShadow dx="0" dy="1.5" stdDeviation="1.6" flood-color="#000" flood-opacity="0.45"/></filter>
</defs>
<polygon points="531.4,245.9 544.9,224.9 544.9,232.5 777.1,94.7 777.7,95.5 549.5,240.0 556.2,243.3" fill="#f0185e" stroke="#f0185e" stroke-width="1.6" stroke-linejoin="round" filter="url(#sh)"/>
<polygon points="723.6,710.6 696.0,708.8 703.3,705.0 643.0,666.3 643.4,665.5 708.1,696.3 707.5,688.1" fill="#0d84f7" stroke="#0d84f7" stroke-width="1.6" stroke-linejoin="round" filter="url(#sh)"/>
<g font-family="'Liberation Sans','Noto Sans CJK JP',sans-serif" font-weight="900" font-size="18" stroke="#fff" stroke-width="3.6" stroke-linejoin="round" paint-order="stroke fill" filter="url(#sh)">
<text x="250" y="250.6" fill="#ea1a5e" textLength="268" lengthAdjust="spacing">歯車レイヤーに、歯と円をコピペ</text>
<text x="250" y="275.2" fill="#ea1a5e" textLength="233" lengthAdjust="spacing">このレイヤーで最終型を作る</text>
<text x="428.5" y="659.8" fill="#0b7ff0" textLength="215.5" lengthAdjust="spacing">レイヤー作成はこれを使う</text>
</g>
<path d="M724.3 705 V714 M719.8 709.5 H728.8" stroke="#fff" stroke-width="1.8" fill="none"/>
</svg>

</body>
</html>
